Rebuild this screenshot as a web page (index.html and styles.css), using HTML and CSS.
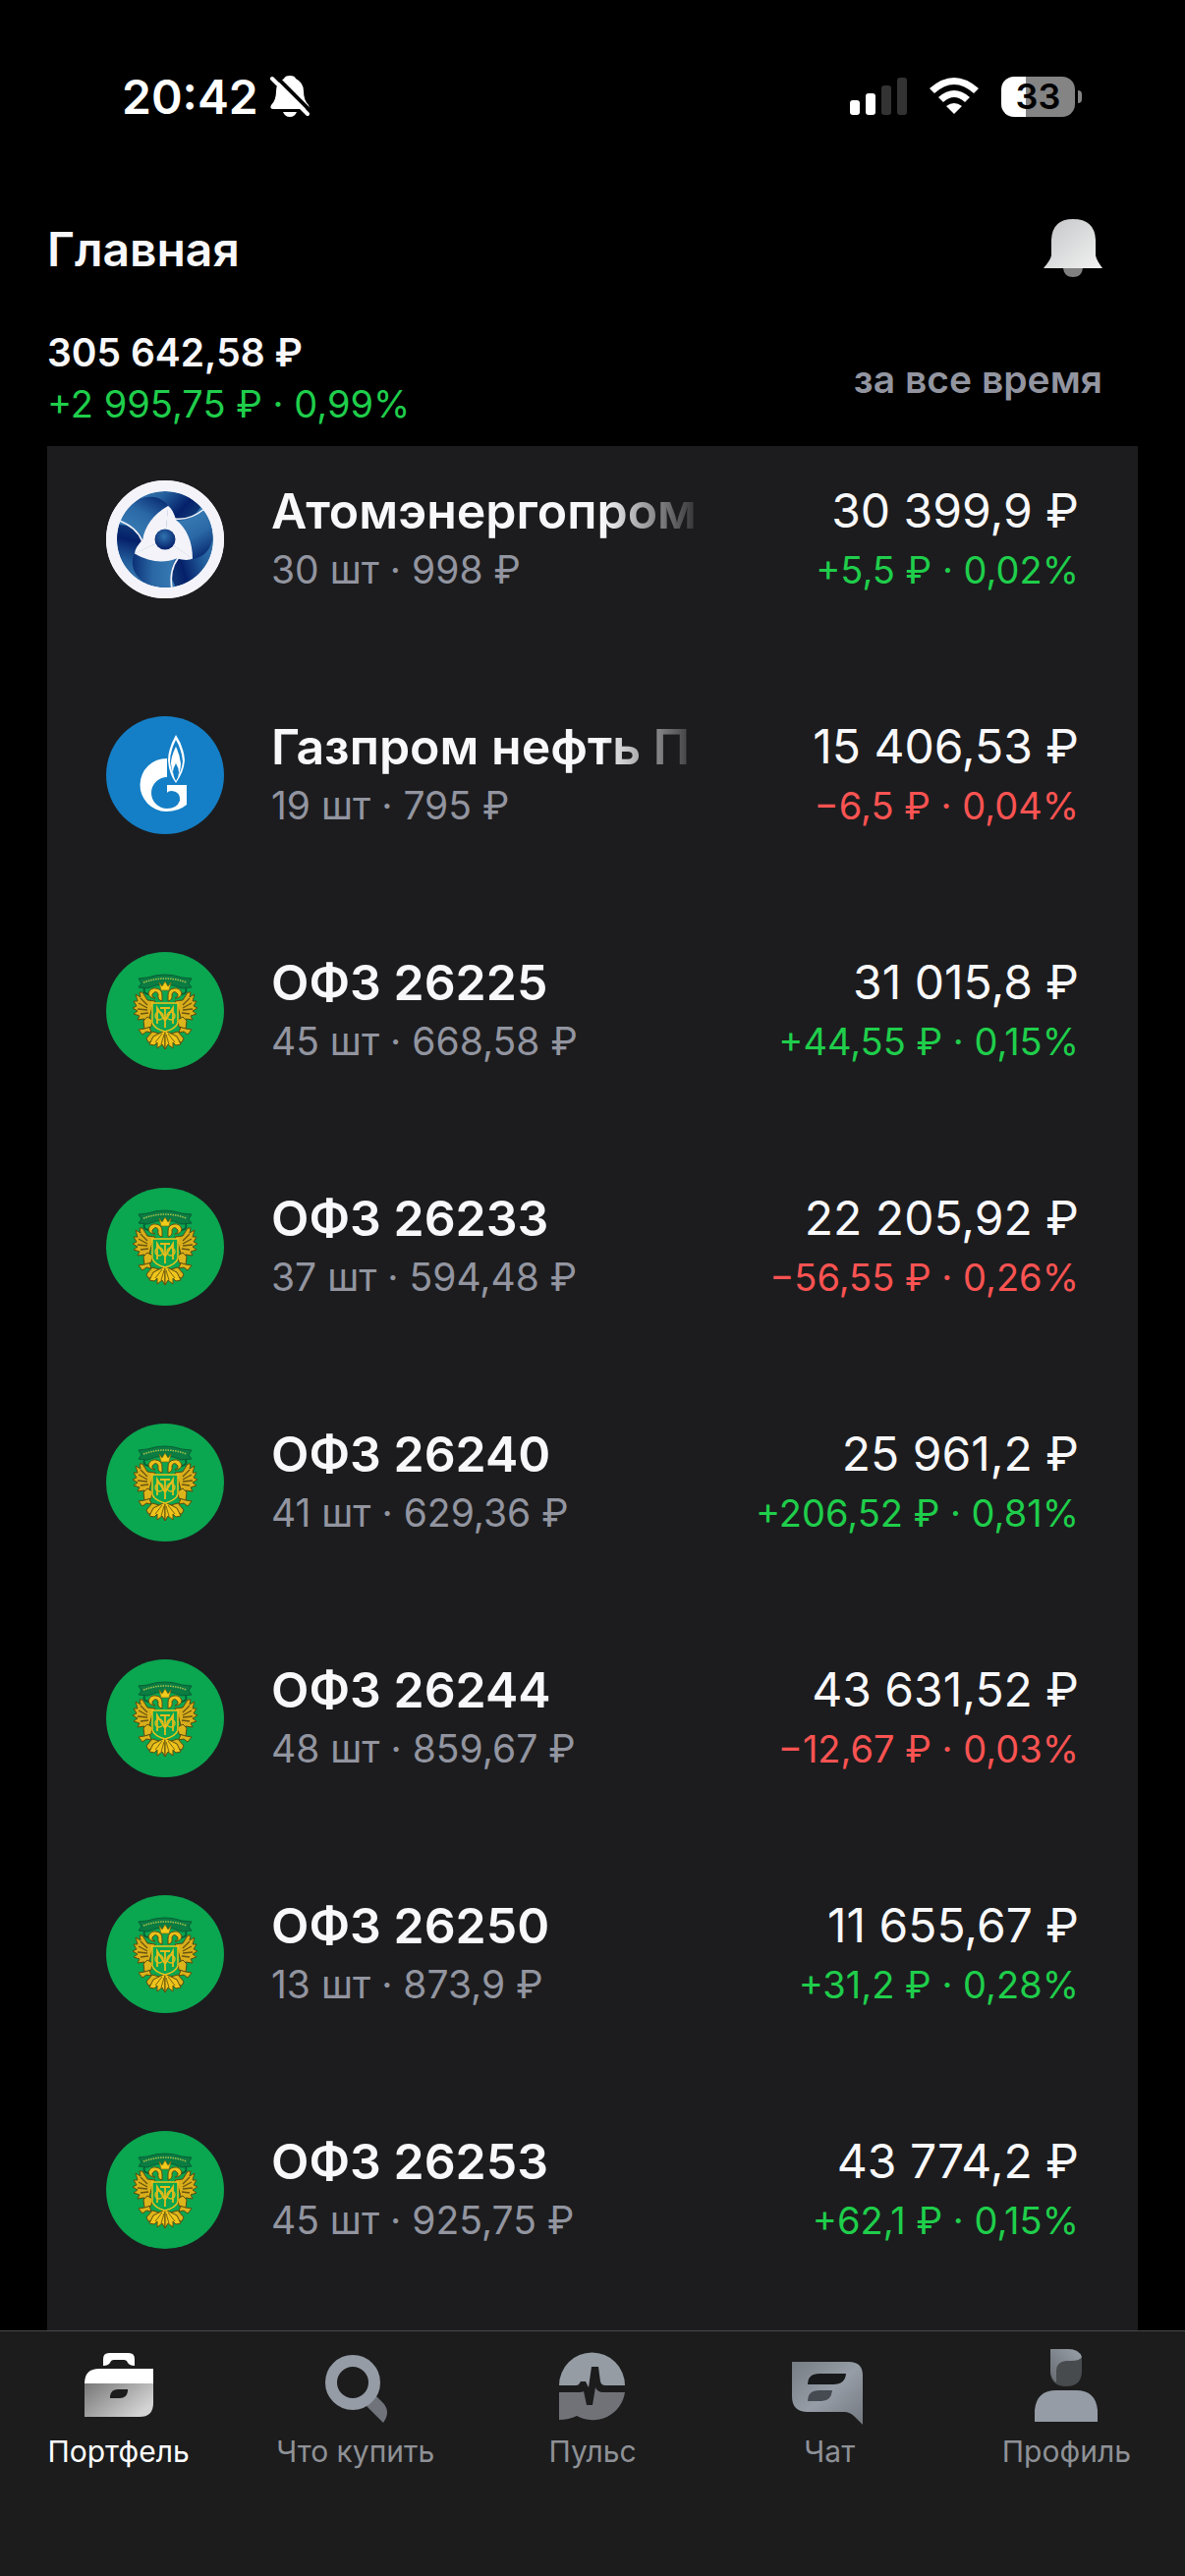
FILE: index.html
```html
<!DOCTYPE html>
<html lang="ru">
<head>
    <meta charset="UTF-8">
    <meta name="viewport" content="width=device-width, initial-scale=1.0">
    <title>Портфель</title>
    <link rel="stylesheet" href="styles.css">
</head>
<body>
    <!-- shared logos and gradients -->
    <svg class="sprite" width="0" height="0" aria-hidden="true">
        <defs>
            <linearGradient id="atom-dark" x1="0" y1="0" x2="1" y2="0.4">
                <stop offset="0" stop-color="#3a7db4"/>
                <stop offset="0.4" stop-color="#235f9c"/>
                <stop offset="0.8" stop-color="#05206a"/>
                <stop offset="1" stop-color="#0d3374"/>
            </linearGradient>
            <linearGradient id="atom-mid" x1="0.1" y1="1" x2="0.8" y2="0">
                <stop offset="0" stop-color="#3e84ba"/>
                <stop offset="0.6" stop-color="#2a68a5"/>
                <stop offset="1" stop-color="#0a2d74"/>
            </linearGradient>
            <radialGradient id="atom-ball" cx="0.45" cy="0.35" r="0.65">
                <stop offset="0" stop-color="#2f74b0"/>
                <stop offset="1" stop-color="#05206a"/>
            </radialGradient>
            <linearGradient id="bell-fill" x1="0" y1="0" x2="1" y2="1">
                <stop offset="0" stop-color="#c4c6c7"/>
                <stop offset="1" stop-color="#f2f2f2"/>
            </linearGradient>
            <linearGradient id="case-fill" x1="0" y1="0" x2="1" y2="0.6">
                <stop offset="0" stop-color="#777"/>
                <stop offset="1" stop-color="#d4d4d4"/>
            </linearGradient>
            <linearGradient id="chat-fill" x1="0" y1="0" x2="1" y2="1">
                <stop offset="0" stop-color="#777d84"/>
                <stop offset="0.5" stop-color="#969da6"/>
                <stop offset="1" stop-color="#737980"/>
            </linearGradient>
            <linearGradient id="hair-fill" x1="0" y1="1" x2="1" y2="0">
                <stop offset="0" stop-color="#666b71"/>
                <stop offset="1" stop-color="#9aa1aa"/>
            </linearGradient>
            <path id="atom-back" d="M-26-41A49 49 0 0 0-47-15Q-28-14-22 0L0 0L4-34Q-8-48-26-41Z" fill="url(#atom-mid)"/>
            <path id="atom-blade" d="M-28-40A49 49 0 0 1 39-30Q25-19 11-21L4-34Q-7-49-28-40Z" fill="url(#atom-dark)"/>
            <path id="atom-line" d="M10-21Q25-19 40-31"/>
            <path id="atom-wing" d="M0 0L3-34Q8-31 11-20C22-11 28 2 28 20Z"/>
        </defs>

        <symbol id="logo-atom" viewBox="-60 -60 120 120">
            <circle r="60" fill="#f3f3f9"/>
            <circle r="49" fill="#245f9c"/>
            <use href="#atom-blade"/>
            <use href="#atom-blade" transform="rotate(120)"/>
            <use href="#atom-blade" transform="rotate(240)"/>
            <use href="#atom-back"/>
            <use href="#atom-back" transform="rotate(120)"/>
            <use href="#atom-back" transform="rotate(240)"/>
            <g fill="none" stroke="#f3f3f9" stroke-width="1.6">
                <use href="#atom-line"/>
                <use href="#atom-line" transform="rotate(120)"/>
                <use href="#atom-line" transform="rotate(240)"/>
            </g>
            <g fill="#f3f3f9">
                <use href="#atom-wing"/>
                <use href="#atom-wing" transform="rotate(120)"/>
                <use href="#atom-wing" transform="rotate(240)"/>
            </g>
            <circle r="10.5" fill="url(#atom-ball)"/>
            <circle r="54.5" fill="none" stroke="#f3f3f9" stroke-width="11"/>
        </symbol>

        <symbol id="logo-gas" viewBox="0 0 120 120">
            <circle cx="60" cy="60" r="60" fill="#147fc6"/>
            <path d="M62 43V70H82V90Q74 97 61 97A27 27 0 0 1 62 43Z" fill="#fff"/>
            <path d="M62 62A16 16 0 0 0 62 94Q72 94 75 86Q76 77 67 76Q63 76 62 78Z" fill="#147fc6"/>
            <path d="M71 19Q63 33 63 45Q64 59 71 68Q79 57 80 45Q79 31 71 19Z" fill="#fff"/>
            <path d="M71 24Q65 36 65 46Q66 56 71 64Q77 56 78 46Q77 34 71 24Z" fill="#147fc6"/>
            <path d="M71 31Q66 41 66 48Q67 58 71 66Q76 57 76 48Q75 39 71 31Z" fill="#fff"/>
            <path d="M71 48Q68 53 68 57Q69 63 71 66Q74 62 74 57Q74 53 71 48Z" fill="#147fc6"/>
        </symbol>

        <symbol id="logo-ofz" viewBox="0 0 120 120">
            <circle cx="60" cy="60" r="60" fill="#0aa650"/>
            <path d="M33 27L42 26Q60 20 77 26L87 27L84 32L87 36L77 37Q60 29 42 37L33 36L36 32Z" fill="#0b7c42" stroke="#075f35"/>
            <path d="M38 31Q60 23 82 31" fill="none" stroke="#a9c34a" stroke-width="1.5" stroke-dasharray="1.5 1"/>
            <path d="M39 37Q37 42 43 43M81 37Q83 42 77 43" fill="none" stroke="#075f35" stroke-width="2"/>
            <path d="M54 31L57 35L60 30L63 35L66 31L64 39H56Z" fill="#f3cb1b" stroke="#80690f" stroke-width="0.7"/>
            <g id="eagle-half">
                <path d="M57 50Q52 49 53 43Q51 38 47 43Q46 46 50 47Q44 47 43 42Q45 36 51 37Q57 38 57 44Z" fill="#e9c01b" stroke="#604f10"/>
                <path d="M50 50L42 49L37 41L34 41L35 46L30 43L32 50L28 50L31 55L27 57L32 60L28 63L34 65L32 69L39 68L39 72L44 67L47 56Z" fill="#d9ae1b" stroke="#5d4c0e"/>
                <path d="M35 47L42 54M33 52L42 57M32 58L42 59M35 63L43 62" stroke="#6a5410" stroke-width="1.3"/>
                <path d="M42 66L47 69L46 76L39 78L38 70ZM39 78L33 79L37 84L41 81L46 82L44 76M47 81L41 88L43 92L49 91L54 83Z" fill="#dcb41b" stroke="#5d4c0e"/>
                <path d="M58 81L48 86L44 94L49 95L52 92L52 98L57 94L60 99V80Z" fill="#efc51c" stroke="#5d4c0e"/>
                <path d="M57 83L50 92M59 84L56 94" stroke="#7b650e"/>
            </g>
            <use href="#eagle-half" transform="matrix(-1 0 0 1 120 0)"/>
            <path d="M47 52H73V72Q71 78 60 81Q49 78 47 72Z" fill="#0ba64f" stroke="#f0c41b" stroke-width="1.4"/>
            <path d="M52 73V57L60 70L68 57V73M60 56V77M55 57H65" fill="none" stroke="#e5bc1c" stroke-width="1.8"/>
            <ellipse cx="54" cy="65" rx="4" ry="4" fill="none" stroke="#e5bc1c" stroke-width="1.4"/>
            <ellipse cx="66" cy="65" rx="4" ry="4" fill="none" stroke="#e5bc1c" stroke-width="1.4"/>
        </symbol>
    </svg>

    <div class="app">
        <div class="status-bar">
            <div class="clock">
                <span>20:42</span>
                <svg width="40" height="44" viewBox="0 0 40 44">
                    <path d="M20 1Q25 1 26 4Q34 8 34 17Q34 26 39 31Q41 35 37 35H3Q-1 35 1 31Q6 26 6 17Q6 8 14 4Q15 1 20 1Z" fill="#fff"/>
                    <path d="M13 38H27Q25 43 20 43Q15 43 13 38Z" fill="#fff"/>
                    <path d="M5 1L42 38" stroke="#000" stroke-width="4"/>
                    <path d="M2 4L38 40" stroke="#fff" stroke-width="4" stroke-linecap="round"/>
                </svg>
            </div>
            <div class="indicators">
                <svg width="58" height="38" viewBox="0 0 58 38">
                    <rect x="0" y="23" width="10" height="15" rx="3" fill="#fff"/>
                    <rect x="16" y="16" width="10" height="22" rx="3" fill="#fff"/>
                    <rect x="32" y="8" width="10" height="30" rx="3" fill="#333"/>
                    <rect x="48" y="0" width="10" height="38" rx="3" fill="#333"/>
                </svg>
                <svg width="50" height="38" viewBox="0 0 50 38">
                    <path d="M0 11Q25-11 50 11L45 16Q25-2 5 16Z" fill="#fff"/>
                    <path d="M9 20Q25 6 41 20L36 25Q25 15 14 25Z" fill="#fff"/>
                    <path d="M17 29Q25 23 33 29L25 37Z" fill="#fff"/>
                </svg>
                <div class="battery"><span>33</span></div>
            </div>
        </div>

        <header class="header">
            <h1>Главная</h1>
            <button class="bell" type="button" aria-label="Уведомления">
                <svg width="60" height="60" viewBox="0 0 60 60">
                    <path d="M20 50H40Q39 59 30 59Q21 59 20 50Z" fill="#808080"/>
                    <path d="M8 37V21Q9 0 30 0Q52 0 53 21V37Q54 42 60 50H0Q7 42 8 37Z" fill="url(#bell-fill)"/>
                </svg>
            </button>
        </header>

        <section class="summary">
            <div>
                <div class="total">305 642,58 ₽</div>
                <div class="up">+2 995,75 ₽ · 0,99%</div>
            </div>
            <button class="period" type="button">за все время</button>
        </section>

        <ul class="assets">
            <li class="asset">
                <svg class="logo"><use href="#logo-atom"/></svg>
                <div class="info">
                    <div class="name fade">Атомэнергопром</div>
                    <div class="count">30 шт · 998 ₽</div>
                </div>
                <div class="money">
                    <div class="price">30 399,9 ₽</div>
                    <div class="up">+5,5 ₽ · 0,02%</div>
                </div>
            </li>
            <li class="asset">
                <svg class="logo"><use href="#logo-gas"/></svg>
                <div class="info">
                    <div class="name fade">Газпром нефть П</div>
                    <div class="count">19 шт · 795 ₽</div>
                </div>
                <div class="money">
                    <div class="price">15 406,53 ₽</div>
                    <div class="down">−6,5 ₽ · 0,04%</div>
                </div>
            </li>
            <li class="asset">
                <svg class="logo"><use href="#logo-ofz"/></svg>
                <div class="info">
                    <div class="name">ОФЗ 26225</div>
                    <div class="count">45 шт · 668,58 ₽</div>
                </div>
                <div class="money">
                    <div class="price">31 015,8 ₽</div>
                    <div class="up">+44,55 ₽ · 0,15%</div>
                </div>
            </li>
            <li class="asset">
                <svg class="logo"><use href="#logo-ofz"/></svg>
                <div class="info">
                    <div class="name">ОФЗ 26233</div>
                    <div class="count">37 шт · 594,48 ₽</div>
                </div>
                <div class="money">
                    <div class="price">22 205,92 ₽</div>
                    <div class="down">−56,55 ₽ · 0,26%</div>
                </div>
            </li>
            <li class="asset">
                <svg class="logo"><use href="#logo-ofz"/></svg>
                <div class="info">
                    <div class="name">ОФЗ 26240</div>
                    <div class="count">41 шт · 629,36 ₽</div>
                </div>
                <div class="money">
                    <div class="price">25 961,2 ₽</div>
                    <div class="up">+206,52 ₽ · 0,81%</div>
                </div>
            </li>
            <li class="asset">
                <svg class="logo"><use href="#logo-ofz"/></svg>
                <div class="info">
                    <div class="name">ОФЗ 26244</div>
                    <div class="count">48 шт · 859,67 ₽</div>
                </div>
                <div class="money">
                    <div class="price">43 631,52 ₽</div>
                    <div class="down">−12,67 ₽ · 0,03%</div>
                </div>
            </li>
            <li class="asset">
                <svg class="logo"><use href="#logo-ofz"/></svg>
                <div class="info">
                    <div class="name">ОФЗ 26250</div>
                    <div class="count">13 шт · 873,9 ₽</div>
                </div>
                <div class="money">
                    <div class="price">11 655,67 ₽</div>
                    <div class="up">+31,2 ₽ · 0,28%</div>
                </div>
            </li>
            <li class="asset">
                <svg class="logo"><use href="#logo-ofz"/></svg>
                <div class="info">
                    <div class="name">ОФЗ 26253</div>
                    <div class="count">45 шт · 925,75 ₽</div>
                </div>
                <div class="money">
                    <div class="price">43 774,2 ₽</div>
                    <div class="up">+62,1 ₽ · 0,15%</div>
                </div>
            </li>
        </ul>

        <nav class="tabs">
            <a href="#" class="active">
                <svg width="80" height="80" viewBox="0 0 80 80">
                    <path d="M24 20V13Q24 7 30 7H50Q56 7 56 13V20Q51 20 49 17Q48 14 45 14H35Q32 14 31 17Q29 20 24 20Z" fill="#fff"/>
                    <path d="M5 38Q5 23 20 23H75V38Z" fill="#fff"/>
                    <path d="M5 38H75V58Q75 72 61 72H5Z" fill="url(#case-fill)"/>
                    <path d="M31 53V51Q32 44 39 44H49V46Q48 53 41 53Z" fill="#1c1c1d"/>
                </svg>
                <span>Портфель</span>
            </a>
            <a href="#">
                <svg width="80" height="80" viewBox="0 0 80 80">
                    <path d="M51 61L61 51L68 58Q76 67 68 78Z" fill="#70747a"/>
                    <circle cx="37" cy="37" r="22" fill="none" stroke="#959ca6" stroke-width="12"/>
                </svg>
                <span>Что купить</span>
            </a>
            <a href="#">
                <svg width="80" height="80" viewBox="0 0 80 80">
                    <path d="M6 40A33 33 0 0 1 73 40H53Q49 40 48 36L46 21H39L36 42L33 36H28L26 39Q25 40 23 40Z" fill="#959ca4"/>
                    <path d="M6 47H26Q30 47 31 46L34 60H40L43 42Q45 47 51 47H73A33 33 0 0 1 24 71Q16 75 6 75Z" fill="#707278"/>
                </svg>
                <span>Пульс</span>
            </a>
            <a href="#">
                <svg width="80" height="80" viewBox="0 0 80 80">
                    <path d="M2 16H60Q74 16 74 30V80L66 72Q61 67 55 67H18Q2 67 2 51Z" fill="url(#chat-fill)"/>
                    <path d="M18 39Q18 28 30 28H57Q56 39 44 39Z" fill="#17191b"/>
                    <path d="M18 56Q18 45 30 45H43Q42 56 32 56Z" fill="#464b52"/>
                </svg>
                <span>Чат</span>
            </a>
            <a href="#">
                <svg width="80" height="80" viewBox="0 0 80 80">
                    <path d="M24 3H42Q52 3 56 12V25Q56 41 40 41Q24 41 24 25Z" fill="#484b4e"/>
                    <path d="M24 3H42Q53 3 56 11Q54 15 45 15H40Q30 16 30 25V37Q24 33 24 25Z" fill="url(#hair-fill)"/>
                    <path d="M8 77V65Q10 45 30 45H50Q70 45 72 65V77Z" fill="#959ca6"/>
                </svg>
                <span>Профиль</span>
            </a>
        </nav>
    </div>
</body>
</html>
```
FILE: styles.css
```css
* {
    box-sizing: border-box;
}

body {
    margin: 0;
    background: #000;
    color: #f8f8fa;
    font-family: Inter, "Liberation Sans", sans-serif;
}

button {
    padding: 0;
    border: none;
    background: none;
    font-family: inherit;
    cursor: pointer;
}

svg {
    display: block;
    flex-shrink: 0;
}

.sprite {
    position: absolute;
}

.app {
    display: flex;
    flex-direction: column;
    min-height: 100vh;
}

/* status bar */
.status-bar {
    display: flex;
    align-items: center;
    justify-content: space-between;
    height: 196px;
    padding: 0 112px 0 124px;
}

.clock {
    display: flex;
    align-items: center;
    gap: 12px;
    font-size: 48px;
    font-weight: 600;
    color: #fff;
}

.indicators {
    display: flex;
    align-items: center;
    gap: 23px;
}

.battery {
    position: relative;
    width: 75px;
    height: 41px;
    border-radius: 13px;
    background: linear-gradient(to right, #fff 33%, #848484 33%);
    color: #000;
    font-size: 36px;
    font-weight: 600;
    line-height: 41px;
    text-align: center;
}

.battery::after {
    content: "";
    position: absolute;
    right: -7px;
    top: 14px;
    width: 4px;
    height: 13px;
    border-radius: 0 4px 4px 0;
    background: #848484;
}

/* header */
.header {
    display: flex;
    align-items: center;
    justify-content: space-between;
    height: 114px;
    padding: 0 84px 0 48px;
}

.header h1 {
    margin: 0;
    font-size: 48px;
    font-weight: 600;
}

.summary {
    display: flex;
    align-items: center;
    justify-content: space-between;
    padding: 22px 84px 16px 48px;
    font-size: 38px;
    line-height: 53px;
}

.total {
    font-size: 39px;
    font-weight: 600;
}

.period {
    color: #9295a0;
    font-size: 39px;
    font-weight: 600;
}

.up {
    color: #1fce4b;
}

.down {
    color: #fa5352;
}

/* assets */
.assets {
    display: flex;
    flex: 1;
    flex-direction: column;
    gap: 118px;
    margin: 0 48px;
    padding: 34px 60px;
    background: #1c1c1e;
    list-style: none;
}

.asset {
    display: flex;
    align-items: center;
    gap: 48px;
    line-height: 60px;
    white-space: nowrap;
}

.logo {
    width: 120px;
    height: 120px;
}

.info {
    flex: 1;
    padding-top: 2px;
}

.name {
    font-size: 50px;
    font-weight: 600;
}

.fade {
    width: 444px;
    overflow: hidden;
    -webkit-mask-image: linear-gradient(to right, #000 76%, transparent);
    mask-image: linear-gradient(to right, #000 76%, transparent);
}

.count {
    color: #9295a0;
    font-size: 39px;
}

.money {
    padding-top: 2px;
    font-size: 38px;
    text-align: right;
}

.price {
    font-size: 48px;
}

/* bottom tabs */
.tabs {
    display: grid;
    grid-template-columns: repeat(5, 1fr);
    height: 250px;
    padding-top: 15px;
    border-top: 1px solid #48484a;
    background: #1c1c1d;
}

.tabs a {
    display: flex;
    flex-direction: column;
    align-items: center;
    gap: 8px;
    color: #8e9196;
    font-size: 30px;
    line-height: 38px;
    text-decoration: none;
}

.tabs .active {
    color: #fff;
}
```
